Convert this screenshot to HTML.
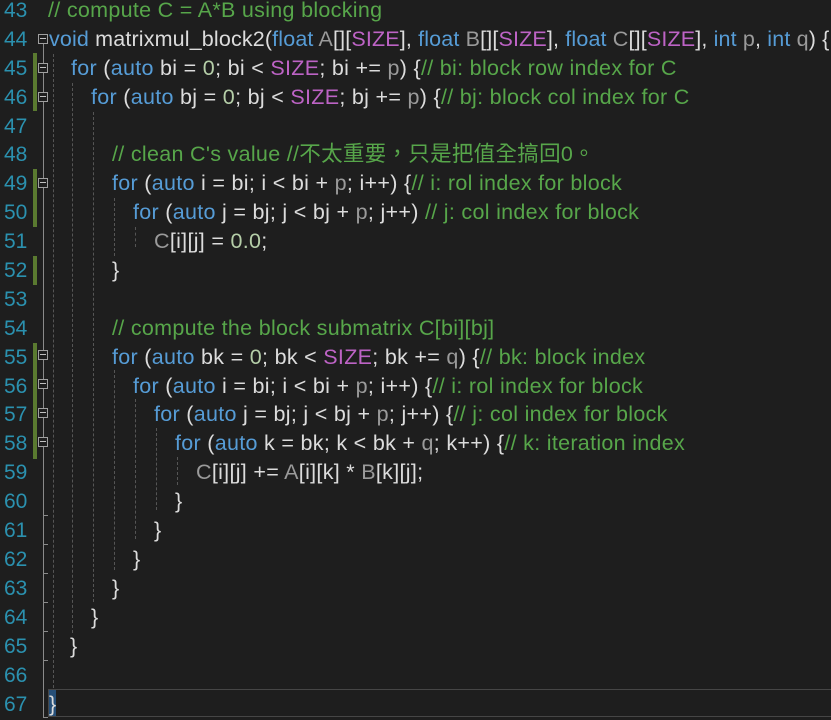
<!DOCTYPE html>
<html><head><meta charset="utf-8"><style>
html,body{margin:0;padding:0;background:#1e1e1e;width:831px;height:720px;overflow:hidden;position:relative}
.l{position:absolute;height:29px;line-height:29px;white-space:nowrap;font-family:"Liberation Sans","Noto Sans CJK TC",sans-serif;font-size:21.5px;letter-spacing:0.3px;color:#dcdcdc}
.n{position:absolute;left:4px;width:30px;height:29px;line-height:29px;font-family:"Liberation Sans",sans-serif;font-size:21px;color:#2b91af}
.k{color:#569cd6}.c{color:#57a64a}.m{color:#bd63c5}.p{color:#9a9a9a}.d{color:#b5cea8}
.bar{position:absolute;left:33px;width:4px;background:#5a7a30}
.fold{position:absolute;left:38px;width:8px;height:8px;border:1px solid #a0a0a0;background:#1e1e1e}
.fold:after{content:"";position:absolute;left:1px;top:3px;width:6px;height:1px;background:#c0c0c0}
.g{position:absolute;width:0;border-left:1px dashed #555}
.tick{position:absolute;left:43px;width:5px;height:1px;background:#8a8a8a}
</style></head><body>
<div style="position:absolute;left:43px;top:34px;width:1px;height:684px;background:#8a8a8a"></div>
<div style="position:absolute;left:48px;top:689px;width:783px;height:26px;border:1px solid #464646;border-right:none"></div>
<div style="position:absolute;left:49px;top:690px;width:7px;height:26px;background:#264f78"></div>

<div class="bar" style="top:53px;height:58px"></div>
<div class="bar" style="top:169px;height:58px"></div>
<div class="bar" style="top:256px;height:29px"></div>
<div class="bar" style="top:343px;height:116px"></div>

<div class="fold" style="top:34px"></div>
<div class="fold" style="top:63px"></div>
<div class="fold" style="top:92px"></div>
<div class="fold" style="top:178px"></div>
<div class="fold" style="top:350px"></div>
<div class="fold" style="top:379px"></div>
<div class="fold" style="top:408px"></div>
<div class="fold" style="top:437px"></div>
<div class="tick" style="top:515px"></div>
<div class="tick" style="top:544px"></div>
<div class="tick" style="top:573px"></div>
<div class="tick" style="top:602px"></div>
<div class="tick" style="top:631px"></div>
<div class="tick" style="top:660px"></div>
<div class="tick" style="top:717px"></div>

<div class="g" style="left:53px;top:54px;height:634px"></div>
<div class="g" style="left:72px;top:83px;height:550px"></div>
<div class="g" style="left:93px;top:112px;height:490px"></div>
<div class="g" style="left:114px;top:198px;height:58px"></div>
<div class="g" style="left:135px;top:227px;height:20px"></div>
<div class="g" style="left:114px;top:370px;height:200px"></div>
<div class="g" style="left:135px;top:399px;height:140px"></div>
<div class="g" style="left:156px;top:428px;height:82px"></div>
<div class="g" style="left:177px;top:457px;height:28px"></div>

<div class="n" style="top:-4px">43</div><div class="l" style="left:48px;top:-4px"><span class="c">// compute C = A*B using blocking</span></div>
<div class="n" style="top:25px">44</div><div class="l" style="left:49px;top:25px;letter-spacing:0.15px"><span class="k">void</span> matrixmul_block2(<span class="k">float</span> <span class="p">A</span>[][<span class="m">SIZE</span>], <span class="k">float</span> <span class="p">B</span>[][<span class="m">SIZE</span>], <span class="k">float</span> <span class="p">C</span>[][<span class="m">SIZE</span>], <span class="k">int</span> <span class="p">p</span>, <span class="k">int</span> <span class="p">q</span>) {</div>
<div class="n" style="top:54px">45</div><div class="l" style="left:71px;top:54px"><span class="k">for</span> (<span class="k">auto</span> bi = <span class="d">0</span>; bi &lt; <span class="m">SIZE</span>; bi += <span class="p">p</span>) {<span class="c">// bi: block row index for C</span></div>
<div class="n" style="top:83px">46</div><div class="l" style="left:91px;top:83px"><span class="k">for</span> (<span class="k">auto</span> bj = <span class="d">0</span>; bj &lt; <span class="m">SIZE</span>; bj += <span class="p">p</span>) {<span class="c">// bj: block col index for C</span></div>
<div class="n" style="top:112px">47</div>
<div class="n" style="top:140px">48</div><div class="l" style="left:112px;top:140px"><span class="c">// clean C's value //不太重要，只是把值全搞回0。</span></div>
<div class="n" style="top:169px">49</div><div class="l" style="left:112px;top:169px"><span class="k">for</span> (<span class="k">auto</span> i = bi; i &lt; bi + <span class="p">p</span>; i++) {<span class="c">// i: rol index for block</span></div>
<div class="n" style="top:198px">50</div><div class="l" style="left:133px;top:198px"><span class="k">for</span> (<span class="k">auto</span> j = bj; j &lt; bj + <span class="p">p</span>; j++) <span class="c">// j: col index for block</span></div>
<div class="n" style="top:227px">51</div><div class="l" style="left:154px;top:227px"><span class="p">C</span>[i][j] = <span class="d">0.0</span>;</div>
<div class="n" style="top:256px">52</div><div class="l" style="left:112px;top:256px">}</div>
<div class="n" style="top:285px">53</div>
<div class="n" style="top:314px">54</div><div class="l" style="left:112px;top:314px"><span class="c">// compute the block submatrix C[bi][bj]</span></div>
<div class="n" style="top:343px">55</div><div class="l" style="left:112px;top:343px"><span class="k">for</span> (<span class="k">auto</span> bk = <span class="d">0</span>; bk &lt; <span class="m">SIZE</span>; bk += <span class="p">q</span>) {<span class="c">// bk: block index</span></div>
<div class="n" style="top:372px">56</div><div class="l" style="left:133px;top:372px"><span class="k">for</span> (<span class="k">auto</span> i = bi; i &lt; bi + <span class="p">p</span>; i++) {<span class="c">// i: rol index for block</span></div>
<div class="n" style="top:400px">57</div><div class="l" style="left:154px;top:400px"><span class="k">for</span> (<span class="k">auto</span> j = bj; j &lt; bj + <span class="p">p</span>; j++) {<span class="c">// j: col index for block</span></div>
<div class="n" style="top:429px">58</div><div class="l" style="left:175px;top:429px"><span class="k">for</span> (<span class="k">auto</span> k = bk; k &lt; bk + <span class="p">q</span>; k++) {<span class="c">// k: iteration index</span></div>
<div class="n" style="top:458px">59</div><div class="l" style="left:196px;top:458px"><span class="p">C</span>[i][j] += <span class="p">A</span>[i][k] * <span class="p">B</span>[k][j];</div>
<div class="n" style="top:487px">60</div><div class="l" style="left:175px;top:487px">}</div>
<div class="n" style="top:516px">61</div><div class="l" style="left:154px;top:516px">}</div>
<div class="n" style="top:545px">62</div><div class="l" style="left:133px;top:545px">}</div>
<div class="n" style="top:574px">63</div><div class="l" style="left:112px;top:574px">}</div>
<div class="n" style="top:603px">64</div><div class="l" style="left:91px;top:603px">}</div>
<div class="n" style="top:632px">65</div><div class="l" style="left:70px;top:632px">}</div>
<div class="n" style="top:661px">66</div>
<div class="n" style="top:690px">67</div><div class="l" style="left:49px;top:690px">}</div>
</body></html>
